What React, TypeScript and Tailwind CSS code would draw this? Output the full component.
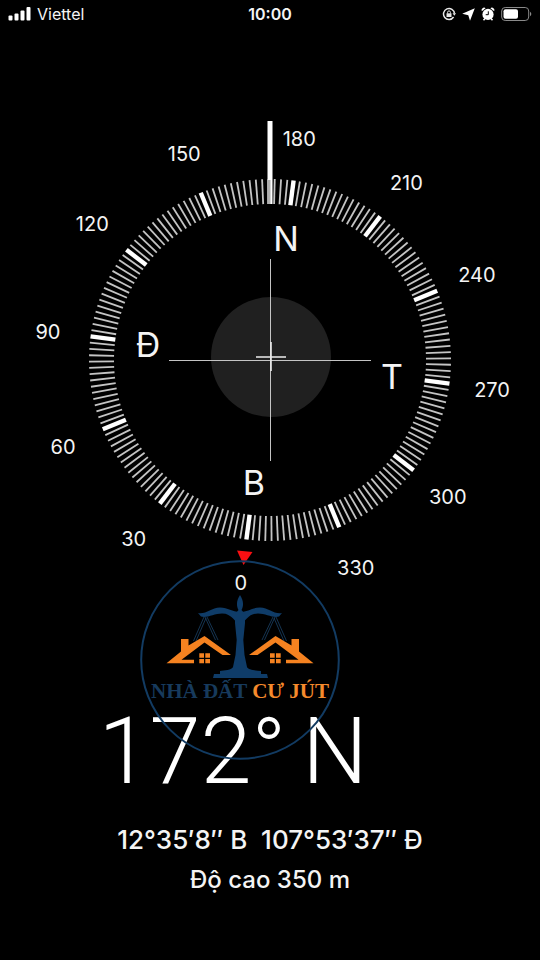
import { ReactNode } from "react";

const HEADING = 172.5;
const CENTER_X = 270;
const CENTER_Y = 250;

const DEGREES = [0, 30, 60, 90, 120, 150, 180, 210, 240, 270, 300, 330];

const DIRECTIONS = [
  { label: "B", degree: 0 },
  { label: "Đ", degree: 90 },
  { label: "N", degree: 180 },
  { label: "T", degree: 270 },
];

function pointOnDial(degree: number, radius: number) {
  const angle = ((degree - HEADING) * Math.PI) / 180;
  return {
    x: CENTER_X + radius * Math.sin(angle),
    y: CENTER_Y - radius * Math.cos(angle),
  };
}

interface DialTextProps {
  degree: number;
  radius: number;
  size: number;
  children: ReactNode;
}

function DialText({ degree, radius, size, children }: DialTextProps) {
  const { x, y } = pointOnDial(degree, radius);

  return (
    <text
      x={x}
      y={y + size * 0.39}
      fontSize={size}
      textAnchor="middle"
      fill="#f4f4f4"
    >
      {children}
    </text>
  );
}

function Compass() {
  const ticks = Array.from({ length: 180 }, (_, i) => i * 2);

  return (
    <svg viewBox="0 0 540 490" className="block w-full" aria-label="Compass">
      {ticks.map((degree) => {
        const major = degree % 30 === 0;
        const from = pointOnDial(degree, 156);
        const to = pointOnDial(degree, 181);
        return (
          <line
            key={degree}
            x1={from.x}
            y1={from.y}
            x2={to.x}
            y2={to.y}
            stroke={major ? "#ffffff" : "#c4c4c4"}
            strokeWidth={major ? 4.4 : 1.8}
          />
        );
      })}

      {DEGREES.map((degree) => (
        <DialText key={degree} degree={degree} radius={224} size={20}>
          {degree}
        </DialText>
      ))}
      {DIRECTIONS.map(({ label, degree }) => (
        <DialText key={label} degree={degree} radius={123} size={34}>
          {label}
        </DialText>
      ))}

      {/* heading line */}
      <rect x="267.5" y="11" width="5" height="83" fill="#fff" />
      <rect x="267.5" y="70" width="3" height="24" fill="#b0b0b0" />

      {/* level */}
      <circle cx="271" cy="247" r="60" fill="#202020" />
      <path d="M270.5 149V351M169 250.5H371" stroke="#c4c4c4" />
      <path d="M271 232V261M256 247H286" stroke="#ececec" strokeWidth="1.6" />

      {/* north marker */}
      <path d="M237 440.5L252.500 442L243.500 455Z" fill="#fb0f12" />
    </svg>
  );
}

function House() {
  return (
    <g fill="#f58220">
      <path d="M26.500 103.300L41 91.500V79H48.500V85.500L64.500 76L91 95H82.500L64.500 82.500L41.500 99.700H54V103.300Z" />
      <path d="M59.300 93.300H64V97.800H59.300ZM65.300 93.300H70V97.800H65.300ZM59.300 99H64V103.300H59.300ZM65.300 99H70V103.300H65.300Z" />
    </g>
  );
}

function ScaleArm() {
  return (
    <g>
      <path
        d="M58 53C66 54.500 71 48 80 47.500C88 47.500 92 52 100 52V66C95 62 92 53.500 82 53.500C74 53.500 67 58.500 61 56.500Z"
        fill="#0f3c68"
      />
      <path
        d="M64 57L53.500 81M66 58L56 81M65 57L75.500 80M67 57L78 80"
        stroke="#1b4166"
        strokeWidth="0.8"
      />
    </g>
  );
}

function Watermark() {
  return (
    <svg viewBox="0 0 200 200" className="size-[200px]" fill="none">
      <circle cx="100" cy="100" r="98.800" stroke="#123b62" strokeWidth="2" />
      <ScaleArm />
      <House />
      <g transform="translate(200 0) scale(-1 1)">
        <ScaleArm />
        <House />
      </g>
      <path
        d="M100 35C104 41 103.500 46 101.500 50L105 54V63L103.300 80L104.500 95L107 107C108 110 116 110.500 121 111V114H127L128 118H73L74 114H80V111C84 110.500 92 110 93 107L95.500 95L96.700 80L95 63V54L98.500 50C96.500 46 96 41 100 35Z"
        fill="#0f3c68"
      />
      <text
        x="100"
        y="138"
        textAnchor="middle"
        fontSize="21"
        fontWeight="700"
        fontFamily="'Liberation Serif', serif"
      >
        <tspan fill="#173a5c">NHÀ ĐẤT </tspan>
        <tspan fill="#f58a2c">CƯ JÚT</tspan>
      </text>
    </svg>
  );
}

function SignalIcon() {
  return (
    <svg viewBox="0 0 23 15" className="h-[15px] w-[23px]" fill="#fff">
      <rect x="0.500" y="8.500" width="4" height="5" rx="1" />
      <rect x="6.500" y="6.500" width="4" height="7" rx="1" />
      <rect x="12.500" y="3.500" width="4" height="10" rx="1" />
      <rect x="18.500" y="0" width="4" height="13.500" rx="1" />
    </svg>
  );
}

function RotationLockIcon() {
  return (
    <svg viewBox="0 0 14 14" className="size-3.5" fill="none" stroke="#e8e8e8">
      <path d="M11.600 10A5.500 5.500 0 1 1 12.500 6.500" strokeWidth="1.500" />
      <path d="M10.500 6.300H14L12.300 8.800Z" fill="#e8e8e8" stroke="none" />
      <path d="M5.600 6.500V5.300A1.400 1.400 0 0 1 8.400 5.300V6.500" />
      <rect x="4.500" y="6.300" width="5" height="3.700" fill="#e8e8e8" stroke="none" />
    </svg>
  );
}

function LocationIcon() {
  return (
    <svg viewBox="0 0 13 13" className="size-[13px]" fill="#fff">
      <path d="M12.800 0.200L8 12.800L6.300 7.200L0.200 5.800Z" />
    </svg>
  );
}

function AlarmIcon() {
  return (
    <svg viewBox="0 0 14 14" className="size-3.5" fill="#fff">
      <circle cx="7" cy="7.400" r="5.600" />
      <path d="M0.800 4.200A2.500 2.500 0 0 1 4.600 1.200ZM13.200 4.200A2.500 2.500 0 0 0 9.400 1.200Z" />
      <path d="M2.500 13.300L4 11.500M11.500 13.300L10 11.500" stroke="#fff" strokeWidth="1.500" />
      <path d="M7.300 4.300V7.700H4.700" stroke="#000" fill="none" />
    </svg>
  );
}

function BatteryIcon() {
  return (
    <svg viewBox="0 0 31 15" className="h-[15px] w-[31px]">
      <rect x="0.700" y="0.500" width="27" height="13" rx="3.500" fill="none" stroke="#8a8a8a" />
      <rect x="2.500" y="2.300" width="14.500" height="9.400" rx="2" fill="#fff" />
      <path d="M29 4.800A2.500 2.500 0 0 1 29 9.200Z" fill="#8a8a8a" />
    </svg>
  );
}

function StatusBar() {
  return (
    <header className="grid h-7 grid-cols-3 items-center px-2">
      <div className="flex items-center gap-1.5 text-base">
        <SignalIcon />
        <span>Viettel</span>
      </div>
      <span className="text-center text-base font-semibold">10:00</span>
      <div className="flex items-center justify-end gap-1.5">
        <RotationLockIcon />
        <LocationIcon />
        <AlarmIcon />
        <BatteryIcon />
      </div>
    </header>
  );
}

export default function App() {
  return (
    <div className="min-h-screen bg-black font-['Inter','Liberation_Sans',sans-serif] text-[#f4f4f4]">
      <StatusBar />

      <main className="pt-[82px]">
        <Compass />

        <section className="relative pt-24 text-center">
          <h1 className="flex justify-center gap-4 pr-[74px] font-['Roboto','Inter',sans-serif] text-[92px] leading-[112px] font-light text-white">
            <span>172°</span>
            <span>N</span>
          </h1>
          <p className="mt-3 text-[26px] leading-10 font-medium whitespace-pre">
            12°35′8″ B  107°53′37″ Đ
          </p>
          <p className="text-2xl leading-10 font-medium">Độ cao 350 m</p>

          <div className="pointer-events-none absolute -top-10 left-1/2 -ml-[130px]">
            <Watermark />
          </div>
        </section>
      </main>
    </div>
  );
}
